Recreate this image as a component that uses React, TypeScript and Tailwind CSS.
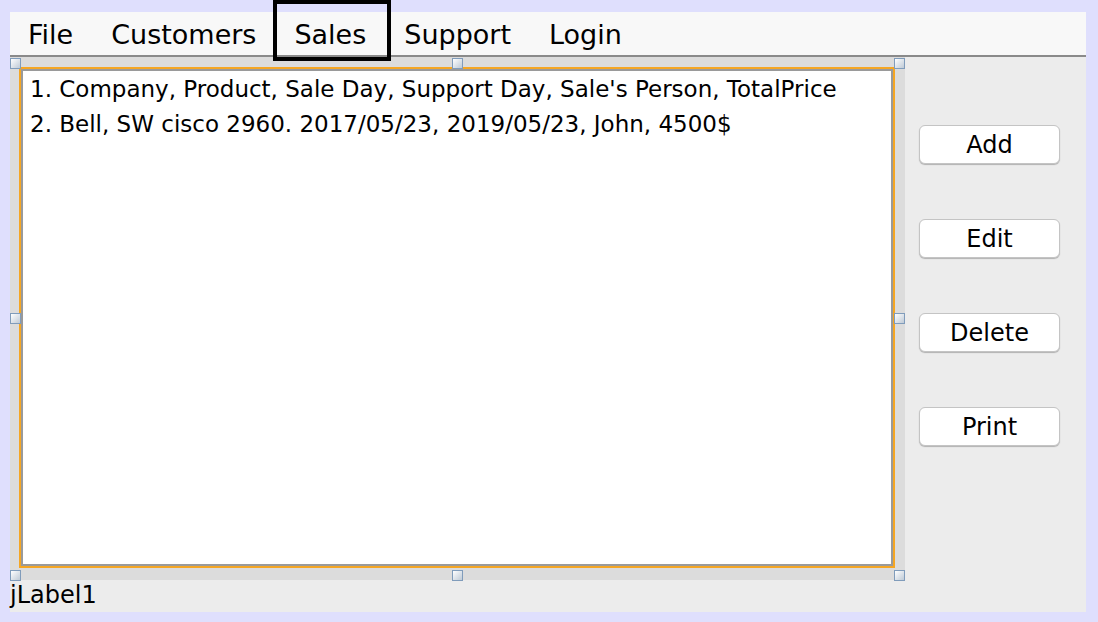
import React from 'react';

const font = { fontFamily: '"DejaVu Sans", "Liberation Sans", sans-serif' };

const Handle: React.FC<{ className: string }> = ({ className }) => (
  <div
    className={`absolute w-[11px] h-[11px] border border-[#809cbb] bg-gradient-to-br from-white to-[#bfcad6] ${className}`}
  />
);

const MENU = ['File', 'Customers', 'Sales', 'Support', 'Login'];
const BUTTONS = ['Add', 'Edit', 'Delete', 'Print'];

const App: React.FC = () => {
  return (
    <div className="relative w-[1098px] h-[622px] bg-[#dfdffd] pt-[12px] pb-[10px] pl-[10px] pr-[12px] text-black" style={font}>
      <div className="h-[600px] flex flex-col bg-[#ececec]">
        {/* menu bar */}
        <div className="h-[45px] shrink-0 flex items-center gap-[38px] pl-[18px] pt-[1px] bg-[#f8f8f8] border-b-2 border-[#8a8a8a] text-[27px] leading-none">
          {MENU.map((m) => (
            <span key={m}>{m}</span>
          ))}
        </div>

        <div className="flex flex-1">
          {/* scroll pane in design view */}
          <div className="relative w-[895px] h-[523px] bg-[#dcdcdc] pt-[10px] pl-[9px] pr-[10px] pb-[12px] shrink-0">
            <div className="h-full border-2 border-[#f5a623]">
              <div className="h-full bg-white border-2 border-[#9a9a9a] pl-[7px] pt-[1px] text-[23px] leading-[35px] whitespace-nowrap">
                <div>1. Company, Product, Sale Day, Support Day, Sale's Person, TotalPrice</div>
                <div>2. Bell, SW cisco 2960. 2017/05/23, 2019/05/23, John, 4500$</div>
              </div>
            </div>
            <Handle className="left-0 top-[1px]" />
            <Handle className="left-[442px] top-[1px]" />
            <Handle className="right-0 top-[1px]" />
            <Handle className="left-0 top-[256px]" />
            <Handle className="right-0 top-[256px]" />
            <Handle className="left-0 bottom-[-1px]" />
            <Handle className="left-[442px] bottom-[-1px]" />
            <Handle className="right-0 bottom-[-1px]" />
          </div>

          {/* buttons */}
          <div className="flex flex-col gap-[55px] pt-[68px] pl-[14px]">
            {BUTTONS.map((b) => (
              <button
                key={b}
                className="w-[141px] h-[39px] rounded-[6px] bg-white border border-[#c4c4c4] shadow-[0_1px_1px_rgba(0,0,0,0.25)] text-[24px] leading-none"
                style={font}
              >
                {b}
              </button>
            ))}
          </div>
        </div>

        <div className="h-[32px] shrink-0 text-[24px] leading-[30px]">jLabel1</div>
      </div>

      {/* selected menu outline */}
      <div className="absolute left-[273px] top-0 w-[118px] h-[61px] border-4 border-black" />
    </div>
  );
};

export default App;
